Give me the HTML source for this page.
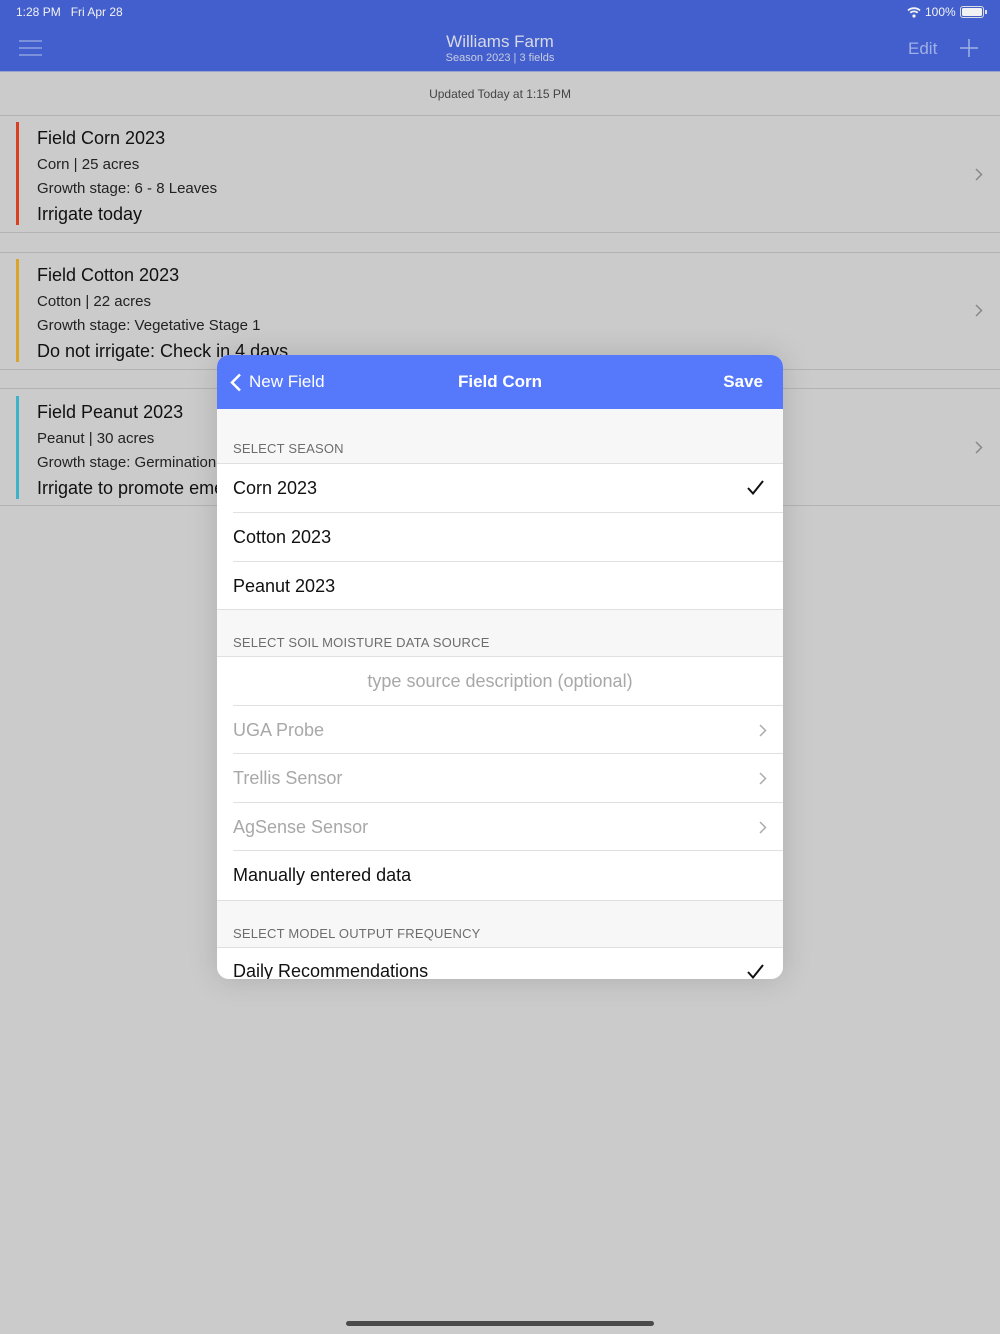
<!DOCTYPE html>
<html><head><meta charset="utf-8"><style>
*{margin:0;padding:0;box-sizing:border-box}
body{width:1000px;height:1334px;background:#cbcbcb;font-family:"Liberation Sans",sans-serif;position:relative;overflow:hidden;color:#111}
.abs{position:absolute}
.nav{left:0;top:0;width:1000px;height:72px;background:#425fcd;border-bottom:1px solid #9aa4c8}
.sb{font-size:12px;color:#f2f2f2;top:5px}
.card{left:0;width:1000px;background:#cbcbcb;border-top:1px solid #b4b4b4;border-bottom:1px solid #b4b4b4}
.bar{left:16px;width:3px}
.t{left:37px;font-size:18px;color:#111}
.s{left:37px;font-size:15px;color:#222}
.a{left:37px;font-size:18px;color:#111}
.modal{left:217px;top:355px;width:566px;height:624px;border-radius:12px;overflow:hidden;background:#f7f7f7;box-shadow:0 0 30px rgba(0,0,0,.15)}
.mh{left:0;top:0;width:566px;height:54px;background:#5679fb;color:#fff}
.sec{left:16px;font-size:13px;color:#6d6d6d;letter-spacing:.2px}
.row{left:0;width:566px;background:#fff;font-size:18px;line-height:48px;padding-left:16px}
.row:after{content:"";position:absolute;left:16px;right:0;bottom:0;height:1px;background:#e0e0e0}
.row.last:after{left:0}
.g{color:#a8a8a8}
</style></head><body>
<div class="abs nav"></div>
<div class="abs sb" style="left:16px">1:28 PM&nbsp;&nbsp;&nbsp;Fri Apr 28</div>
<div class="abs sb" style="left:925px">100%</div>
<svg class="abs" style="left:907px;top:6px" width="14" height="12" viewBox="0 0 14 12"><path d="M1 4.5a9 9 0 0 1 12 0M3.3 6.8a5.5 5.5 0 0 1 7.4 0" stroke="#f2f2f2" stroke-width="1.8" fill="none"/><circle cx="7" cy="10" r="1.6" fill="#f2f2f2"/></svg>
<div class="abs" style="left:960px;top:6px;width:24px;height:12px;border:1px solid #ddd;border-radius:3px;padding:1px"><div style="width:100%;height:100%;background:#f2f2f2;border-radius:1.5px"></div></div>
<div class="abs" style="left:985px;top:10px;width:2px;height:4px;background:#ddd"></div>
<svg class="abs" style="left:19px;top:40px" width="23" height="16"><path d="M0 1h23M0 8h23M0 15h23" stroke="#8fa2e0" stroke-width="1.5"/></svg>
<div class="abs" style="left:0;width:1000px;top:32px;text-align:center;font-size:17px;color:#d6d9e6">Williams Farm</div>
<div class="abs" style="left:0;width:1000px;top:52px;text-align:center;font-size:11px;color:#c9cde0">Season 2023 | 3 fields</div>
<div class="abs" style="left:908px;top:39px;font-size:17px;color:#9fb0e6">Edit</div>
<svg class="abs" style="left:960px;top:39px" width="18" height="18"><path d="M9 0v18M0 9h18" stroke="#9fb0e6" stroke-width="1.5"/></svg>
<div class="abs" style="left:0;width:1000px;top:87px;text-align:center;font-size:12px;color:#444">Updated Today at 1:15 PM</div>

<div class="abs card" style="top:115px;height:118px"></div>
<div class="abs bar" style="top:122px;height:103px;background:#d8401f"></div>
<div class="abs t" style="top:128px">Field Corn 2023</div>
<div class="abs s" style="top:156px">Corn | 25 acres</div>
<div class="abs s" style="top:180px">Growth stage: 6 - 8 Leaves</div>
<div class="abs a" style="top:204px">Irrigate today</div>

<div class="abs card" style="top:252px;height:118px"></div>
<div class="abs bar" style="top:259px;height:103px;background:#d8a52a"></div>
<div class="abs t" style="top:265px">Field Cotton 2023</div>
<div class="abs s" style="top:293px">Cotton | 22 acres</div>
<div class="abs s" style="top:317px">Growth stage: Vegetative Stage 1</div>
<div class="abs a" style="top:341px">Do not irrigate: Check in 4 days</div>

<div class="abs card" style="top:388px;height:118px"></div>
<div class="abs bar" style="top:396px;height:103px;background:#3cb3c8"></div>
<div class="abs t" style="top:402px">Field Peanut 2023</div>
<div class="abs s" style="top:430px">Peanut | 30 acres</div>
<div class="abs s" style="top:454px">Growth stage: Germination</div>
<div class="abs a" style="top:478px">Irrigate to promote emergence</div>

<svg class="abs" style="left:975px;top:168px" width="8" height="13"><path d="M1 1l5.5 5.5L1 12" stroke="#888" stroke-width="1.5" fill="none"/></svg>
<svg class="abs" style="left:975px;top:304px" width="8" height="13"><path d="M1 1l5.5 5.5L1 12" stroke="#888" stroke-width="1.5" fill="none"/></svg>
<svg class="abs" style="left:975px;top:441px" width="8" height="13"><path d="M1 1l5.5 5.5L1 12" stroke="#888" stroke-width="1.5" fill="none"/></svg>

<div class="abs modal">
 <div class="abs mh">
  <svg class="abs" style="left:13px;top:18px" width="12" height="19"><path d="M10 1.5L2 9.5l8 8" stroke="#fff" stroke-width="2.5" fill="none"/></svg>
  <div class="abs" style="left:32px;top:17px;font-size:17px">New Field</div>
  <div class="abs" style="left:0;width:566px;text-align:center;top:17px;font-size:17px;font-weight:bold">Field Corn</div>
  <div class="abs" style="right:20px;top:17px;font-size:17px;font-weight:bold">Save</div>
 </div>
 <div class="abs sec" style="top:86px">SELECT SEASON</div>
 <div class="abs" style="top:108px;left:0;width:566px;height:1px;background:#e0e0e0"></div>
 <div class="abs row" style="top:109px;height:49px">Corn 2023<svg class="abs" style="right:19px;top:16px" width="17" height="15"><path d="M1 8l5 5.5L16 1" stroke="#111" stroke-width="2" fill="none"/></svg></div>
 <div class="abs row" style="top:158px;height:49px">Cotton 2023</div>
 <div class="abs row last" style="top:207px;height:48px">Peanut 2023</div>
 <div class="abs sec" style="top:280px">SELECT SOIL MOISTURE DATA SOURCE</div>
 <div class="abs" style="top:301px;left:0;width:566px;height:1px;background:#e0e0e0"></div>
 <div class="abs row g" style="top:302px;height:49px;text-align:center;padding-left:0">type source description (optional)</div>
 <div class="abs row g" style="top:351px;height:48px">UGA Probe<svg class="abs" style="right:16px;top:18px" width="8" height="13"><path d="M1 1l5.5 5.5L1 12" stroke="#aaa" stroke-width="1.5" fill="none"/></svg></div>
 <div class="abs row g" style="top:399px;height:49px">Trellis Sensor<svg class="abs" style="right:16px;top:18px" width="8" height="13"><path d="M1 1l5.5 5.5L1 12" stroke="#aaa" stroke-width="1.5" fill="none"/></svg></div>
 <div class="abs row g" style="top:448px;height:48px">AgSense Sensor<svg class="abs" style="right:16px;top:18px" width="8" height="13"><path d="M1 1l5.5 5.5L1 12" stroke="#aaa" stroke-width="1.5" fill="none"/></svg></div>
 <div class="abs row last" style="top:496px;height:50px">Manually entered data</div>
 <div class="abs sec" style="top:571px">SELECT MODEL OUTPUT FREQUENCY</div>
 <div class="abs" style="top:592px;left:0;width:566px;height:1px;background:#e0e0e0"></div>
 <div class="abs row" style="top:593px;height:49px"><span style="position:relative;top:-1px">Daily Recommendations</span><svg class="abs" style="right:19px;top:16px" width="17" height="15"><path d="M1 8l5 5.5L16 1" stroke="#111" stroke-width="2" fill="none"/></svg></div>
</div>
<div class="abs" style="left:346px;top:1321px;width:308px;height:5px;border-radius:3px;background:#4a4a4a"></div>
</body></html>
